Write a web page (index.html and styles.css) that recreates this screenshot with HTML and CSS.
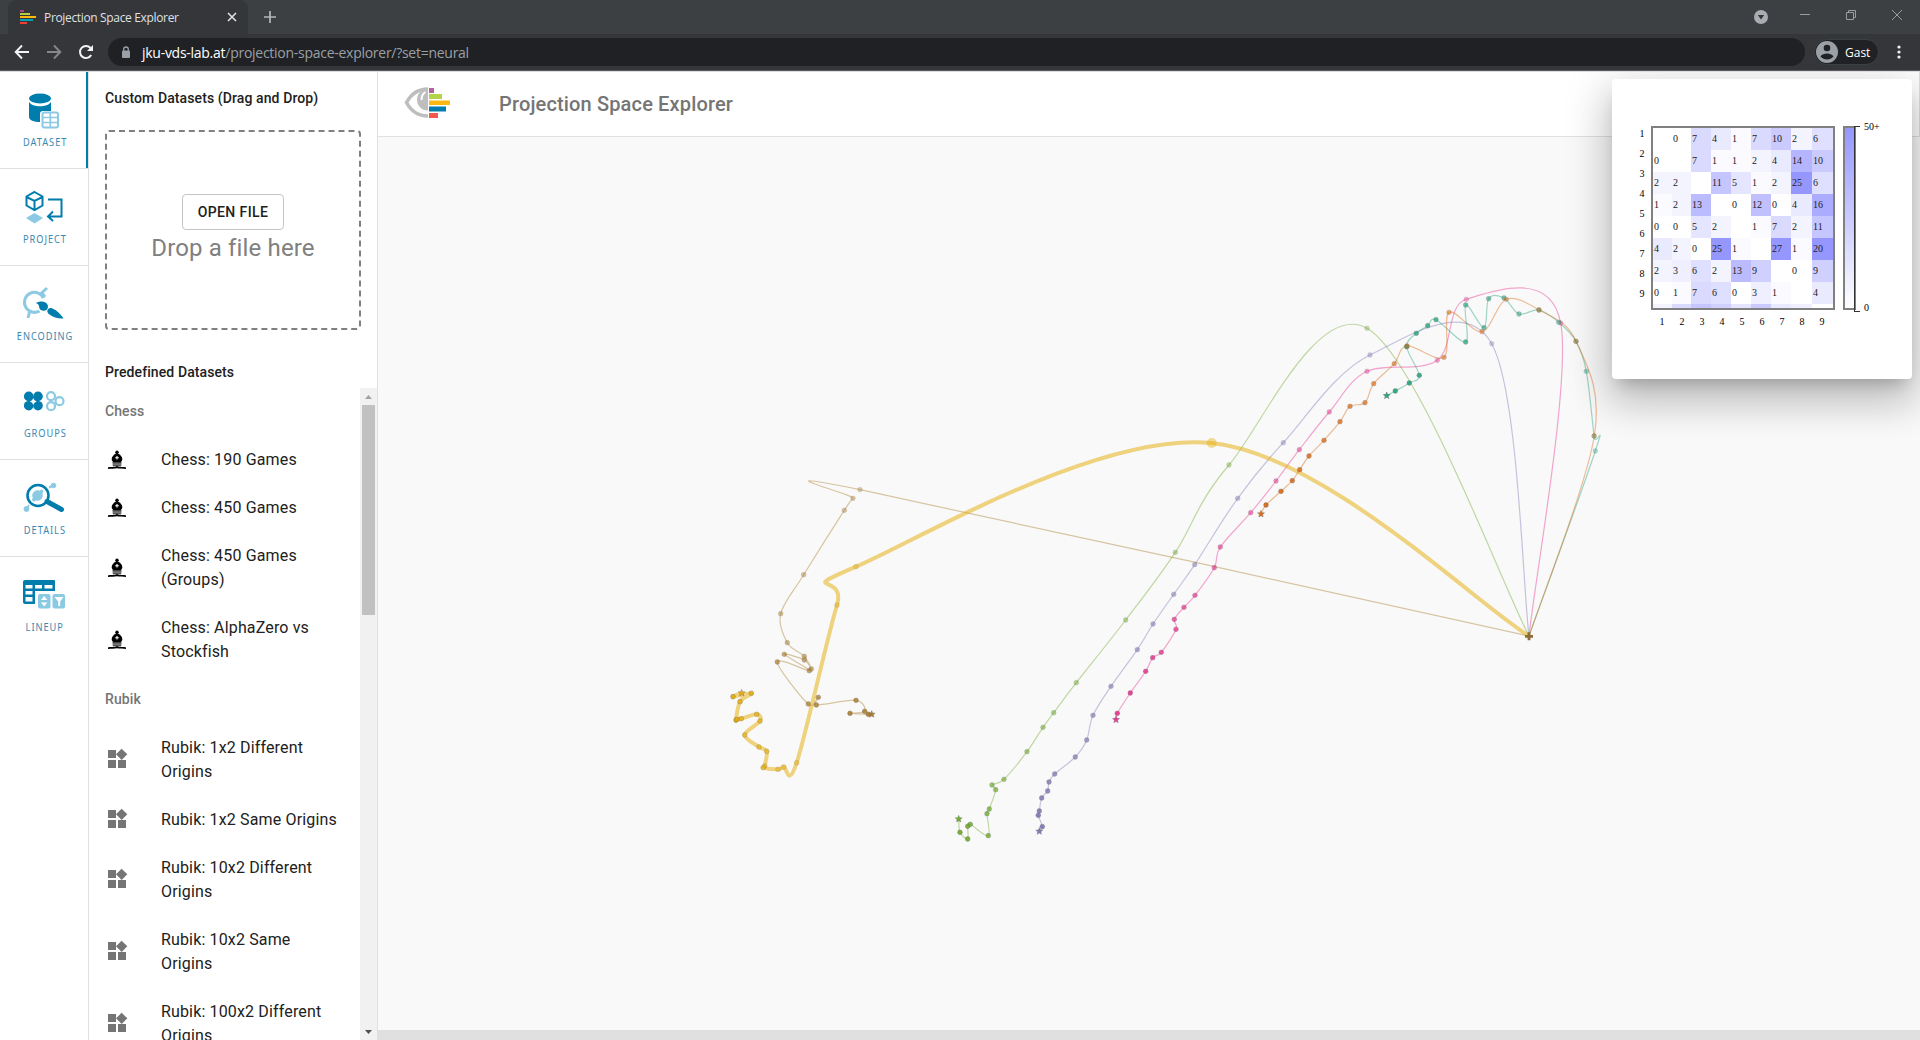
FILE: index.html
```html
<!DOCTYPE html>
<html lang="en">
<head>
<meta charset="utf-8">
<title>Projection Space Explorer</title>
<link rel="stylesheet" href="styles.css">
</head>
<body>
<div class="browser">
  <div class="tabstrip">
    <div class="tab">
      <svg class="favicon" width="17" height="16" viewBox="0 0 17 16"><path fill="#a6498c" d="M0 1h4v2H0z"/><path fill="#b5cf3c" d="M0 4h10v2H0z"/><path fill="#fbb80f" d="M0 7h16v2H0z"/><path fill="#00a0b8" d="M0 10h13v2H0z"/><path fill="#ef3e36" d="M0 13h7v2H0z"/></svg>
      <span class="tab-title">Projection Space Explorer</span>
      <svg width="10" height="10" viewBox="0 0 10 10" stroke="#dfe1e5" stroke-width="1.6"><path d="M1 1l8 8M9 1l-8 8"/></svg>
    </div>
    <svg class="newtab" width="12" height="12" viewBox="0 0 12 12" stroke="#b4b7bb" stroke-width="1.7"><path d="M6 0v12M0 6h12"/></svg>
    <div class="window-buttons">
      <svg width="14" height="14" viewBox="0 0 14 14"><circle cx="7" cy="7" r="7" fill="#a9acb0"/><path d="M3.8 5h6.4L7 9.6z" fill="#35363a"/></svg>
      <svg width="10" height="10" viewBox="0 0 10 10" stroke="#9a9da0"><path d="M0 4.500h10"/></svg>
      <svg width="10" height="10" viewBox="0 0 10 10" fill="none" stroke="#9a9da0"><path d="M.5 2.5h7v7h-7zM2.5 2.500V.5h7v7h-2"/></svg>
      <svg width="10" height="10" viewBox="0 0 10 10" stroke="#9a9da0"><path d="M0 0l10 10M10 0L0 10"/></svg>
    </div>
  </div>
  <div class="toolbar">
    <svg width="16" height="16" viewBox="0 0 16 16" fill="none" stroke="#f1f3f4" stroke-width="1.9"><path d="M15 8H2M8 1.500L1.700 8 8 14.500"/></svg>
    <svg width="16" height="16" viewBox="0 0 16 16" fill="none" stroke="#85878a" stroke-width="1.9"><path d="M1 8h13M8 1.500L14.300 8 8 14.500"/></svg>
    <svg width="16" height="16" viewBox="0 0 16 16"><path d="M13.200 11A6 6 0 1 1 12.500 4" fill="none" stroke="#f1f3f4" stroke-width="2"/><path d="M15 1v6H9z" fill="#f1f3f4"/></svg>
    <div class="omnibox">
      <svg width="10" height="13" viewBox="0 0 10 13"><rect x="1" y="4.500" width="8" height="7.500" rx="1" fill="#9aa0a6"/><path d="M2.700 5V3.300a2.300 2.300 0 0 1 4.600 0V5" fill="none" stroke="#9aa0a6" stroke-width="1.300"/></svg>
      <span class="url"><b>jku-vds-lab.at</b>/projection-space-explorer/?set=neural</span>
    </div>
    <div class="profile">
      <svg width="22" height="22" viewBox="0 0 22 22"><circle cx="11" cy="11" r="11" fill="#9aa0a6"/><circle cx="11" cy="7" r="3.300" fill="#202124"/><path d="M4.500 15.500c1.300-2.300 4-3 6.500-3s5.200.7 6.500 3c-1.600 2-4 3-6.500 3s-4.900-1-6.500-3z" fill="#202124"/></svg>
      <span>Gast</span>
    </div>
    <svg class="menu" width="4" height="16" viewBox="0 0 4 16" fill="#f1f3f4"><circle cx="2" cy="3" r="1.600"/><circle cx="2" cy="8" r="1.600"/><circle cx="2" cy="13" r="1.600"/></svg>
  </div>
</div>

<div class="app">
  <nav class="nav">
    <div class="nav-item active">
      <svg width="44" height="44" viewBox="0 0 44 44"><g fill="#007dad"><ellipse cx="18" cy="9.500" rx="11" ry="5"/><path d="M7 13c2 3 6.500 4.300 11 4.300S27 16 29 13v9H21q-3 0-3 3v8C12 33 7 31 7 28z"/></g><rect x="20.500" y="23.500" width="15.500" height="15" rx="2" fill="#fff" stroke="#8ccae3" stroke-width="2"/><path d="M28.300 24v14M20.500 28.500h15.500M20.500 33.500h15.500" stroke="#8ccae3" stroke-width="1.700"/></svg>
      <span>DATASET</span>
    </div>
    <div class="nav-item">
      <svg width="44" height="44" viewBox="0 0 44 44" fill="none" stroke="#007dad" stroke-width="2"><path d="M12.500 6l8 4.500v9l-8 4.500-8-4.500v-9zM4.500 11l8 4 8-4M12.500 15v9"/><path d="M4 32l8.500-5 8.500 5-8.500 5.500z" fill="#8ccae3" stroke="none"/><path d="M26 13.500h13.500V30.500H27M31 25.500l-5 5 5 4.500"/></svg>
      <span>PROJECT</span>
    </div>
    <div class="nav-item">
      <svg width="44" height="44" viewBox="0 0 44 44"><g fill="none" stroke="#8ccae3" stroke-width="3"><path d="M21.500 15A10 10 0 1 0 17.500 28"/><path d="M18.500 11l6.500-6M8 27L6 35M20 10l3 4"/></g><g fill="#007dad"><path d="M14 20c3-2 7-2 9.500-.5 3 2 3 5 1.500 7-2.500 2-6 1.500-7.500-1C17 23 17 21 14 20z"/><path d="M25.500 27c1.500-2 3-2.500 5-1.500 4.500 2 8.500 6 11 10-5 .5-10-1-14-4-2-1.500-2.500-3-2-4.500z"/></g></svg>
      <span>ENCODING</span>
    </div>
    <div class="nav-item">
      <svg width="44" height="44" viewBox="0 0 44 44"><g transform="translate(0 .7)"><g fill="#007dad"><path d="M7 16h9v9H7z"/><circle cx="6.700" cy="15.700" r="4.800"/><circle cx="16" cy="15.700" r="4.800"/><circle cx="6.700" cy="25" r="4.800"/><circle cx="16" cy="25" r="4.800"/><path d="M11.300 17.300l1.200 2.300 2.200 1.200-2.200 1.200-1.200 2.300-1.200-2.300-2.300-1.200 2.300-1.200z" fill="#fff"/></g><g fill="none" stroke="#8ccae3" stroke-width="2.200"><circle cx="29" cy="15.500" r="4"/><circle cx="29" cy="25.500" r="4"/><circle cx="37.500" cy="20.500" r="4"/></g></g></svg>
      <span>GROUPS</span>
    </div>
    <div class="nav-item">
      <svg width="44" height="44" viewBox="0 0 44 44"><g fill="#8ccae3" stroke="#8ccae3"><circle cx="15.500" cy="18.500" r="4.800"/><circle cx="19.500" cy="14.500" r="1.500"/><circle cx="12" cy="22.500" r="1.500"/><circle cx="31.500" cy="8.500" r="2.300"/><path d="M27 10.500l4-2M7 28l-3 5" stroke-width="2"/><circle cx="4.500" cy="32" r="2.500"/></g><circle cx="16" cy="18.500" r="10.500" fill="none" stroke="#007dad" stroke-width="2.600"/><path d="M25 24.500l14.500 8" stroke="#007dad" stroke-width="5" stroke-linecap="round"/></svg>
      <span>DETAILS</span>
    </div>
    <div class="nav-item">
      <svg width="44" height="44" viewBox="0 0 44 44"><path fill="#007dad" fill-rule="evenodd" d="M3 6h29q1 0 1 1v10H13v13H3q-2 0-2-2V8q0-2 2-2zM3.500 11v3.500h7V11zM13 11v3.500h7V11zM22.500 11v3.500h8V11zM3.500 17v3.500h7V17zM3.500 23v4.500h7V23z"/><g fill="#8ccae3"><rect x="16" y="20" width="12.500" height="14.500" rx="2"/><rect x="30.500" y="20" width="12.500" height="14.500" rx="2"/></g><path fill="#fff" d="M19 26l3.200-4 3.200 4zM19 28.500l3.200 4 3.200-4zM32.500 23h9l-3.300 4.500V32h-2v-4.500z"/></svg>
      <span>LINEUP</span>
    </div>
  </nav>

  <aside class="panel">
    <h2>Custom Datasets (Drag and Drop)</h2>
    <div class="dropzone">
      <button class="open-file">OPEN FILE</button>
      <div class="drop-text">Drop a file here</div>
    </div>
    <h2 class="predefined">Predefined Datasets</h2>
    <div class="list-wrap">
      <div class="list">
        <h3>Chess</h3>
        <div class="row"><svg class="ico"><use href="#bishop"/></svg><span>Chess: 190 Games</span></div>
        <div class="row"><svg class="ico"><use href="#bishop"/></svg><span>Chess: 450 Games</span></div>
        <div class="row"><svg class="ico"><use href="#bishop"/></svg><span>Chess: 450 Games (Groups)</span></div>
        <div class="row"><svg class="ico"><use href="#bishop"/></svg><span>Chess: AlphaZero vs Stockfish</span></div>
        <h3>Rubik</h3>
        <div class="row"><svg class="ico"><use href="#widgets"/></svg><span>Rubik: 1x2 Different Origins</span></div>
        <div class="row"><svg class="ico"><use href="#widgets"/></svg><span>Rubik: 1x2 Same Origins</span></div>
        <div class="row"><svg class="ico"><use href="#widgets"/></svg><span>Rubik: 10x2 Different Origins</span></div>
        <div class="row"><svg class="ico"><use href="#widgets"/></svg><span>Rubik: 10x2 Same<br>Origins</span></div>
        <div class="row"><svg class="ico"><use href="#widgets"/></svg><span>Rubik: 100x2 Different Origins</span></div>
      </div>
      <div class="scrollbar">
        <svg width="17" height="17" viewBox="0 0 17 17"><path d="M5 11l3.500-4 3.500 4z" fill="#a3a3a3"/></svg>
        <div class="thumb"></div>
        <svg width="17" height="17" viewBox="0 0 17 17"><path d="M5 7l3.500 4L12 7z" fill="#505050"/></svg>
      </div>
    </div>
  </aside>

  <main class="main">
    <header class="appbar">
      <svg width="48" height="34" viewBox="0 0 48 34"><g><path d="M24 3C13 3 6 10 2.500 16.500 6 23 13 30 24 30" fill="none" stroke="#bebebe" stroke-width="3.600"/><path d="M24 2.500v22c-7 0-11-5-11-11 0-4 2-7 5-9z" fill="#bebebe"/><path d="M17.500 14c0-4 1.500-6.500 4-8" fill="none" stroke="#fff" stroke-width="2"/></g><path fill="#b3639f" d="M25 2h5v5h-5z"/><path fill="#b4d34b" d="M25 8h13v5H25z"/><path fill="#fdb812" d="M25 14.500h21v4.500H25z"/><path fill="#007dad" d="M25 20.500h17v5H25z"/><path fill="#f4594f" d="M25 27h9v5h-9z"/></svg>
      <h1>Projection Space Explorer</h1>
    </header>
    <svg class="plot" id="plot" width="1542" height="893" viewBox="378 137 1542 893"></svg>
    <div class="bottom-strip"></div>
  </main>

  <section class="card">
    <div class="row-labels" id="row-labels"></div>
    <div class="matrix-col">
      <div class="matrix" id="matrix"></div>
      <div class="col-labels" id="col-labels"></div>
    </div>
    <div class="legend"></div>
    <div class="legend-labels"><span>50+</span><span>0</span></div>
  </section>
</div>

<svg class="defs" width="0" height="0">
  <symbol id="bishop" viewBox="0 0 24 24"><circle cx="12" cy="5.300" r="1.700"/><path d="M12 6c3.300 1.500 5.300 3.500 5.300 6 0 1.500-.8 2.500-1.800 3.300h-7C7.500 14.500 6.700 13.500 6.700 12c0-2.500 2-4.500 5.300-6z"/><path d="M12 9v3.600M10.200 10.800h3.600" stroke="#fff" stroke-width="1.100"/><path d="M7.600 15.500h8.800v3.300H7.600z" fill="#777"/><path d="M7.600 15.700h8.800M8 18.900h8" stroke="#222" stroke-width=".9"/><path d="M12 19c1.500 1 2.500 1 4.500 1s4 0 4.500.5V22c-2-.4-7-.4-9-.8-2 .4-7 .4-9 .8v-1.500c.5-.5 2.500-.5 4.500-.5s3 0 4.500-1z"/></symbol>
  <symbol id="widgets" viewBox="0 0 24 24"><path fill="#757575" d="M13 13v8h8v-8h-8zM3 21h8v-8H3v8zM3 3v8h8V3H3zm13.660-1.310L11 7.340 16.660 13l5.660-5.660-5.660-5.650z"/></symbol>
</svg>
<script src="app.js"></script>
</body>
</html>
```

FILE: styles.css
```css
* { box-sizing: border-box; }
body {
  margin: 0;
  width: 1920px;
  height: 1040px;
  overflow: hidden;
  display: flex;
  flex-direction: column;
  background: #fff;
  font-family: Roboto, "Liberation Sans", sans-serif;
}
svg { flex: none; display: block; }
.defs { position: absolute; }

.browser { flex: none; height: 72px; border-bottom: 1px solid #dcdbde; background: #5b595f; color: #dfe1e5; font-family: "Open Sans", "Noto Sans", sans-serif; }
.tabstrip { height: 34px; display: flex; align-items: center; background: #3c4043; padding-left: 8px; }
.tab { width: 240px; height: 34px; background: #35363a; border-radius: 8px 8px 0 0; display: flex; align-items: center; padding: 0 12px; }
.tab-title { margin: 0 auto 0 7px; font-size: 12px; letter-spacing: -0.34px; white-space: nowrap; }
.tab > svg:last-child { margin-right: -1px; }
.newtab { margin-left: 16px; }
.window-buttons { margin-left: auto; display: flex; align-items: center; padding: 0 18px 5px 0; }
.window-buttons svg { margin-left: 36px; }
.window-buttons svg:first-child { margin: 5px -4px 0 0; }
.toolbar { height: 36px; background: #35363a; display: flex; align-items: center; padding-left: 14px; }
.toolbar > svg { margin-right: 16px; }
.omnibox { width: 1697px; height: 28px; border-radius: 14px; background: #202124; display: flex; align-items: center; padding-left: 13px; margin-left: -2px; }
.url { margin-left: 11px; font-size: 14px; letter-spacing: -0.27px; color: #9aa0a6; white-space: nowrap; }
.url b { font-weight: 400; color: #fff; }
.profile { width: 65px; height: 26px; margin-left: 9px; border-radius: 13px; background: #202124; border: 1px solid #3c4043; display: flex; align-items: center; padding-left: 1px; gap: 7px; font-size: 12px; color: #fff; }
.toolbar > .menu { margin: 0 0 0 18px; }

.app { flex: 1; min-height: 0; display: flex; position: relative; overflow: hidden; }

.nav { width: 89px; border-right: 1px solid #e0e0e0; }
.nav-item { height: 97px; border-bottom: 1px solid #e0e0e0; display: flex; flex-direction: column; align-items: center; padding-top: 17px; font-family: "Noto Sans", sans-serif; }
.nav-item:last-child { border-bottom: 0; }
.nav-item span { font-size: 10.5px; line-height: 14px; letter-spacing: 1.1px; color: #3c87b0; margin-top: 2px; margin-left: 2px; transform: scaleX(0.88); }
.active { box-shadow: inset -2px 0 #007dad; }

.panel { width: 289px; border-right: 1px solid #e0e0e0; display: flex; flex-direction: column; }
h1, h2, h3 { margin: 0; font-weight: 500; }
h2 { font-size: 14px; line-height: 22px; letter-spacing: 0.1px; color: #212121; margin: 15px 0 0 16px; }
.dropzone { flex: none; width: 256px; height: 200px; margin: 21px 0 0 16px; border: 2px dashed #808080; border-radius: 4px; display: flex; flex-direction: column; align-items: center; padding-top: 62px; }
.open-file { width: 102px; height: 36px; padding: 0 0 1px; border: 1px solid #c4c4c4; border-radius: 4px; background: #fff; font: 500 14px Roboto, sans-serif; letter-spacing: 0.4px; color: #212121; }
.drop-text { font-size: 24px; line-height: 32px; margin-top: 2px; letter-spacing: 0.15px; color: #808080; }
.predefined { margin-top: 31px; }
.list-wrap { flex: 1; min-height: 0; margin-top: 5px; display: flex; }
.list { flex: 1; overflow: hidden; padding-left: 16px; margin-top: -1px; }
h3 { font-size: 14px; line-height: 48px; letter-spacing: 0.1px; color: #757575; }
.row { display: flex; align-items: center; padding: 12px 16px 12px 0; gap: 32px; font-size: 16px; line-height: 24px; letter-spacing: 0.15px; color: #212121; }
.row span { padding-top: 1px; margin-bottom: -1px; }
.ico { width: 24px; height: 24px; }
.scrollbar { width: 17px; background: #f1f1f1; display: flex; flex-direction: column; align-items: center; }
.thumb { width: 13px; height: 210px; background: #c1c1c1; margin-bottom: auto; }

.main { flex: 1; display: flex; flex-direction: column; background: #f9f9f9; }
.appbar { flex: none; height: 65px; background: #fff; border-bottom: 1px solid #e0e0e0; border-right: 1px solid #e0e0e0; display: flex; align-items: center; padding: 0 0 3px 26px; }
h1 { font-size: 20px; letter-spacing: 0.15px; color: #757575; margin: 3px 0 0 47px; }
.bottom-strip { flex: 1; background: #e0e0e0; }

.card { position: absolute; left: 1612px; top: 7px; width: 300px; height: 300px; border-radius: 4px; background: #fff; box-shadow: 0 11px 15px -7px rgba(0,0,0,.2), 0 24px 38px 3px rgba(0,0,0,.14), 0 9px 46px 8px rgba(0,0,0,.12); display: flex; padding: 47px 0 0 25px; font: 10px "Liberation Serif", serif; color: #000; }
.row-labels { width: 14px; line-height: 20px; margin-top: -2px; display: flex; flex-direction: column; text-align: left; padding-left: 2.5px; }
.matrix { width: 184px; height: 184px; border: 2px solid #808080; overflow: hidden; display: grid; grid-template-columns: 19px 19px 20px 20px 20px 20px 20px 21px 21px; grid-template-rows: repeat(8, 22px) 4px; line-height: 21px; color: #222; }
.matrix span { padding-left: 1px; }
.col-labels { display: grid; grid-template-columns: repeat(9, 20px); text-align: center; line-height: 20px; padding-left: 1px; margin-top: 2px; }
.legend { width: 13px; height: 184px; margin-left: 8px; border: 2px solid #808080; background: linear-gradient(#9696ff, #fff); }
.legend-labels { position: relative; height: 193px; margin: -5px 0 0 -2px; padding-left: 10px; display: flex; flex-direction: column; justify-content: space-between; line-height: 12px; }
.legend-labels::before { content: ""; position: absolute; left: 0; top: 5px; width: 5px; height: 184px; border: 1px solid #333; border-width: 1px 0 1px 1px; }
```

FILE: app.js
```javascript
const SVG_NS = "http://www.w3.org/2000/svg";
const ORIGIN = [1529, 636];

// Each trajectory runs from its final state (star) back to the shared origin.
const tracks = [
  { color: "#66a61e", pts: [[958.7,819],[960,832.3],[967.7,839],[967.7,826.3],[970.3,824.3],[988.3,835.7],[987,813.7],[989.3,809],[995.7,789.7],[992,785],[1004,779.3],[1027,751.7],[1043,727.3],[1053.7,712.7],[1076.3,682.7],[1125.7,620],[1175.3,552.3],[1229,465],[1367,328.3]] },
  { color: "#7570b3", pts: [[1039.3,831.3],[1042.3,826.7],[1038.3,815.3],[1039.3,811],[1041.7,798],[1047.7,791],[1049,782],[1054.7,774],[1075.3,757],[1086.7,740],[1093,715.3],[1111,686.3],[1137.3,649.7],[1153,624],[1173.7,594.3],[1194.7,564.7],[1237.7,498.3],[1283.3,442.7],[1370,355],[1491.7,343.7]] },
  { color: "#e7298a", pts: [[1116,719.7],[1117.3,713.3],[1130.3,693],[1145.7,671.3],[1152.7,657.7],[1161.3,652.3],[1176,629.3],[1174.3,619.3],[1184,607.3],[1195,595.3],[1214.3,567.7],[1220.3,547],[1250.7,512.7],[1276,481],[1299.3,449.7],[1329.3,412],[1367,371.3],[1437.3,360.3],[1466.3,299.3],[1560.7,323]] },
  { color: "#a6761d", pts: [[871.7,714.3],[868.3,714.3],[850,713.3],[864.7,711.3],[856,700.3],[816.3,705],[818.3,697.3],[808.3,704],[777.3,662],[809.3,670.7],[784.3,654.3],[804.3,660],[811.3,669],[804.3,656.3],[787.3,642.7],[780.7,613.7],[803.7,574.7],[844.3,510.3],[853,498.3],[860,489.7]] },
  { color: "#e6ab02", width: 4, pts: [[741.7,693],[733,696.7],[751.3,693.3],[740,701.7],[736,720],[737,719.3],[741.3,718.7],[756.7,714.3],[760,721],[744.7,735],[759,747],[766.7,751.3],[764.7,766],[763.3,767.7],[778,769.3],[783.7,767],[796.7,762.7],[837,605],[856,566.7],[1211.7,443]] },
  { color: "#1b9e77", pts: [[1386.7,395.7],[1395.3,391],[1409.3,383],[1419.3,375.3],[1406.7,346.7],[1416.3,333.3],[1427.7,325.7],[1436,319.7],[1465.7,342],[1465.7,305],[1484,327.7],[1488.7,298.7],[1504,298],[1519,314],[1539,310],[1558.7,322.3],[1576,341.3],[1586.3,371.3],[1594,436],[1595.3,451]] },
  { color: "#d95f02", pts: [[1261,514],[1266,505],[1281,491.3],[1292.3,480.7],[1299.7,469.7],[1309,456],[1324,440.3],[1340,421.7],[1350,406.3],[1365,402.7],[1373.7,383.7],[1394.3,363.7],[1407,346],[1444,357.3],[1449,312.3],[1482,331.7],[1506.3,299.3],[1539,310],[1576,341.3],[1594.3,436]] }
];

function add(parent, name, attrs) {
  const el = document.createElementNS(SVG_NS, name);
  for (const key in attrs) el.setAttribute(key, attrs[key]);
  parent.appendChild(el);
  return el;
}

// Uniform Catmull-Rom spline written as cubic Bezier segments.
function spline(pts) {
  let d = `M${pts[0]}`;
  for (let i = 0; i < pts.length - 1; i++) {
    const p0 = pts[i - 1] || pts[i], p1 = pts[i], p2 = pts[i + 1], p3 = pts[i + 2] || p2;
    const c1 = [0, 1].map(k => p1[k] + (p2[k] - p0[k]) / 6);
    const c2 = [0, 1].map(k => p2[k] - (p3[k] - p1[k]) / 6);
    d += `C${c1} ${c2} ${p2}`;
  }
  return d;
}

function star(x, y, r) {
  const out = [];
  for (let i = 0; i < 10; i++) {
    const a = -Math.PI / 2 + i * Math.PI / 5, q = i % 2 ? r * 0.45 : r;
    out.push((x + q * Math.cos(a)).toFixed(2) + "," + (y + q * Math.sin(a)).toFixed(2));
  }
  return out.join(" ");
}

const plot = document.getElementById("plot");
for (const t of tracks) {
  add(plot, "path", { d: spline([...t.pts, ORIGIN]), fill: "none", stroke: t.color, "stroke-width": t.width || 1.2, "stroke-opacity": t.width ? 0.5 : 0.4 });
}
for (const t of tracks) {
  t.pts.forEach(([x, y], i) => {
    const o = 0.9 - 0.55 * i / (t.pts.length - 1);
    const look = { fill: t.color, "fill-opacity": o, stroke: "#666", "stroke-opacity": o * 0.5, "stroke-width": 0.8 };
    if (i === 0) add(plot, "polygon", { points: star(x, y, 3.7), ...look });
    else if (t.width && i === t.pts.length - 1) add(plot, "circle", { cx: x, cy: y, r: 5, fill: t.color, "fill-opacity": 0.4 });
    else add(plot, "circle", { cx: x, cy: y, r: 2.4, ...look });
  });
}
add(plot, "path", { d: `M${ORIGIN[0] - 4} ${ORIGIN[1] + .3}h8M${ORIGIN[0]} ${ORIGIN[1] - 3.7}v8`, stroke: "#8c6d38", "stroke-width": 2.8 });

// Transition counts; null marks a blank diagonal cell.
const matrix = [
  [null,0,7,4,1,7,10,2,6],
  [0,null,7,1,1,2,4,14,10],
  [2,2,null,11,5,1,2,25,6],
  [1,2,13,null,0,12,0,4,16],
  [0,0,5,2,null,1,7,2,11],
  [4,2,0,25,1,null,27,1,20],
  [2,3,6,2,13,9,null,0,9],
  [0,1,7,6,0,3,1,null,4],
  [2,7,11,9,5,10,4,3,null]
];
const grid = document.getElementById("matrix");
matrix.forEach((values, r) => {
  for (const v of values) {
    const cell = document.createElement("span");
    // The last row is only a sliver of colour, too low to hold its numbers.
    cell.textContent = v === null || r === 8 ? "" : v;
    cell.style.background = `rgba(150,150,255,${Math.min(1, (v || 0) / 20)})`;
    grid.appendChild(cell);
  }
});
for (const id of ["row-labels", "col-labels"]) {
  for (let i = 1; i <= 9; i++) {
    const label = document.createElement("span");
    label.textContent = i;
    document.getElementById(id).appendChild(label);
  }
}
```
